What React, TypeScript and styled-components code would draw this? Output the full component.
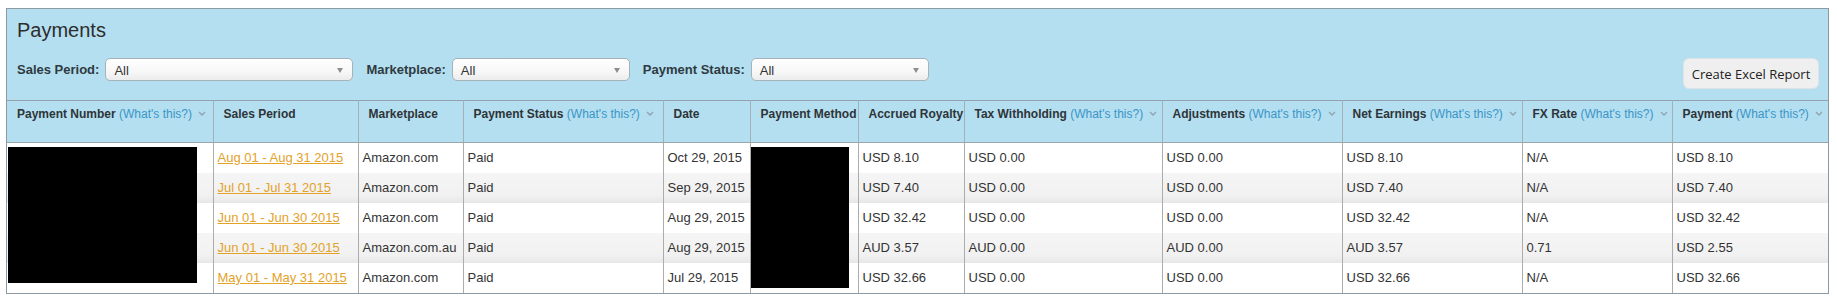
import React from "react";
import styled, { createGlobalStyle } from "styled-components";

const GlobalStyle = createGlobalStyle`
  html, body { margin: 0; padding: 0; background: #ffffff; }
  body { font-family: "Liberation Sans", Arial, sans-serif; color: #333333; }
`;

const Page = styled.div`
  padding: 8px 0 0 6px;
`;

const Panel = styled.section`
  width: 1823px;
  box-sizing: border-box;
  border: 1px solid #8c9aa3;
  background: #b4dff0;
`;

const Title = styled.h2`
  margin: 0;
  padding: 10px 0 0 10px;
  font-size: 20px;
  line-height: 22px;
  font-weight: normal;
  color: #2d2d2d;
`;

const Toolbar = styled.div`
  display: flex;
  align-items: flex-start;
  height: 31px;
  padding: 17px 9px 0 10px;
  margin-bottom: 11px;
`;

const FilterGroup = styled.div`
  display: flex;
  align-items: center;
  gap: 6px;
  height: 23px;
  margin-right: 13px;
`;

const FilterLabel = styled.span`
  font-size: 13px;
  font-weight: bold;
  color: #2e3a40;
`;

const SelectBox = styled.div<{ $w: number }>`
  width: ${(p) => p.$w}px;
  height: 23px;
  box-sizing: border-box;
  display: flex;
  align-items: center;
  justify-content: space-between;
  padding: 2px 9px 0 8px;
  border: 1px solid #a7b2b8;
  border-radius: 5px;
  background: linear-gradient(to bottom, #ffffff 0%, #f7f7f7 60%, #ececec 100%);
  font-size: 13px;
  color: #333;
`;

const Caret = styled.span`
  width: 0;
  height: 0;
  border-left: 3.5px solid transparent;
  border-right: 3.5px solid transparent;
  border-top: 5px solid #8d8d8d;
`;

const ExcelButton = styled.button`
  margin-left: auto;
  width: 136px;
  height: 31px;
  border: 1px solid #dde3e6;
  border-radius: 6px;
  background: #efefef;
  font-family: "Open Sans", "Noto Sans", sans-serif;
  font-size: 13px;
  color: #222;
  padding: 0;
  cursor: pointer;
`;

const Table = styled.table`
  width: 100%;
  border-collapse: collapse;
  table-layout: fixed;
  border-top: 1px solid #94a3ab;
`;

const HeadRow = styled.tr`
  height: 42px;
`;

const Th = styled.th`
  vertical-align: top;
  text-align: left;
  padding: 6px 0 0 10px;
  font-size: 12px;
  line-height: 15px;
  font-weight: bold;
  color: #2e3438;
  white-space: nowrap;
  overflow: hidden;
  border-left: 1px solid #a2b1b8;
  border-bottom: 1px solid #9ba7ad;
  &:first-child { border-left: none; }
`;

const Help = styled.span`
  font-weight: normal;
  color: #3a95c8;
`;

const Chevron = styled.svg`
  margin-left: 6px;
  vertical-align: 2px;
`;

const BodyRow = styled.tr<{ $alt: boolean }>`
  height: 30px;
  background: ${(p) =>
    p.$alt
      ? "linear-gradient(to bottom, #f5f5f5 0%, #f1f1f1 75%, #e7e7e7 100%)"
      : "#ffffff"};
`;

const Td = styled.td`
  padding: 0 4px;
  font-size: 13px;
  color: #333;
  white-space: nowrap;
  vertical-align: middle;
  border-left: 1px solid #acacac;
  &:first-child { border-left: none; }
`;

const RedactCell = styled(Td)`
  position: relative;
`;

const Redaction = styled.div<{ $left: number; $w: number; $h: number }>`
  position: absolute;
  top: 4px;
  left: ${(p) => p.$left}px;
  width: ${(p) => p.$w}px;
  height: ${(p) => p.$h}px;
  background: #000;
  z-index: 2;
`;

const PeriodLink = styled.a`
  color: #e3a229;
  text-decoration: underline;
`;

const cols = [206, 145, 105, 200, 87, 108, 106, 198, 180, 180, 150, 156];

const headers: { label: string; help?: boolean; chevron?: boolean }[] = [
  { label: "Payment Number", help: true, chevron: true },
  { label: "Sales Period" },
  { label: "Marketplace" },
  { label: "Payment Status", help: true, chevron: true },
  { label: "Date" },
  { label: "Payment Method" },
  { label: "Accrued Royalty" },
  { label: "Tax Withholding", help: true, chevron: true },
  { label: "Adjustments", help: true, chevron: true },
  { label: "Net Earnings", help: true, chevron: true },
  { label: "FX Rate", help: true, chevron: true },
  { label: "Payment", help: true, chevron: true },
];

const rows = [
  ["Aug 01 - Aug 31 2015", "Amazon.com", "Paid", "Oct 29, 2015", "USD 8.10", "USD 0.00", "USD 0.00", "USD 8.10", "N/A", "USD 8.10"],
  ["Jul 01 - Jul 31 2015", "Amazon.com", "Paid", "Sep 29, 2015", "USD 7.40", "USD 0.00", "USD 0.00", "USD 7.40", "N/A", "USD 7.40"],
  ["Jun 01 - Jun 30 2015", "Amazon.com", "Paid", "Aug 29, 2015", "USD 32.42", "USD 0.00", "USD 0.00", "USD 32.42", "N/A", "USD 32.42"],
  ["Jun 01 - Jun 30 2015", "Amazon.com.au", "Paid", "Aug 29, 2015", "AUD 3.57", "AUD 0.00", "AUD 0.00", "AUD 3.57", "0.71", "USD 2.55"],
  ["May 01 - May 31 2015", "Amazon.com", "Paid", "Jul 29, 2015", "USD 32.66", "USD 0.00", "USD 0.00", "USD 32.66", "N/A", "USD 32.66"],
];

const filters = [
  { label: "Sales Period:", w: 248 },
  { label: "Marketplace:", w: 178 },
  { label: "Payment Status:", w: 178 },
];

export default function App() {
  return (
    <>
      <GlobalStyle />
      <Page>
        <Panel>
          <Title>Payments</Title>
          <Toolbar>
            {filters.map((f) => (
              <FilterGroup key={f.label}>
                <FilterLabel>{f.label}</FilterLabel>
                <SelectBox $w={f.w}>
                  <span>All</span>
                  <Caret />
                </SelectBox>
              </FilterGroup>
            ))}
            <ExcelButton>Create Excel Report</ExcelButton>
          </Toolbar>
          <Table>
            <colgroup>
              {cols.map((w, i) => (
                <col key={i} style={{ width: w }} />
              ))}
            </colgroup>
            <thead>
              <HeadRow>
                {headers.map((h) => (
                  <Th key={h.label}>
                    {h.label}
                    {h.help && <Help> (What's this?)</Help>}
                    {h.chevron && (
                      <Chevron width="8" height="5" viewBox="0 0 8 5">
                        <path d="M1 1 L4 4 L7 1" fill="none" stroke="#8fa2ae" strokeWidth="1.3" />
                      </Chevron>
                    )}
                  </Th>
                ))}
              </HeadRow>
            </thead>
            <tbody>
              {rows.map((r, i) => (
                <BodyRow key={i} $alt={i % 2 === 1}>
                  <RedactCell>
                    {i === 0 && <Redaction $left={1} $w={189} $h={136} />}
                  </RedactCell>
                  <Td>
                    <PeriodLink href="#">{r[0]}</PeriodLink>
                  </Td>
                  <Td>{r[1]}</Td>
                  <Td>{r[2]}</Td>
                  <Td>{r[3]}</Td>
                  <RedactCell>
                    {i === 0 && <Redaction $left={0} $w={98} $h={141} />}
                  </RedactCell>
                  <Td>{r[4]}</Td>
                  <Td>{r[5]}</Td>
                  <Td>{r[6]}</Td>
                  <Td>{r[7]}</Td>
                  <Td>{r[8]}</Td>
                  <Td>{r[9]}</Td>
                </BodyRow>
              ))}
            </tbody>
          </Table>
        </Panel>
      </Page>
    </>
  );
}
